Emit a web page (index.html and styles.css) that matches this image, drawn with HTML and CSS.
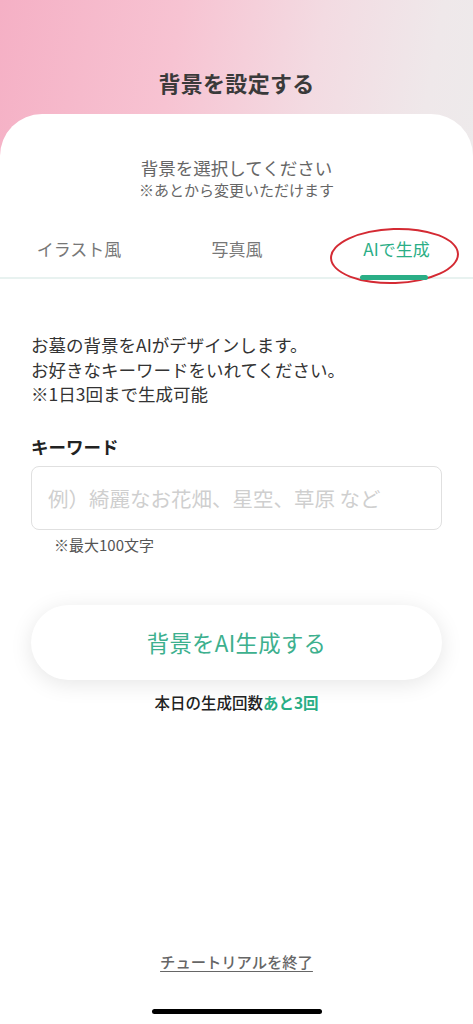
FILE: index.html
```html
<!DOCTYPE html>
<html lang="ja">
<head>
<meta charset="utf-8">
<title>背景を設定する</title>
<link rel="stylesheet" href="styles.css">
</head>
<body>
<div class="screen">
  <header class="header">
    <h1 class="title">背景を設定する</h1>
  </header>
  <main class="card">
    <div class="intro">
      <p class="intro-main">背景を選択してください</p>
      <p class="intro-sub">※あとから変更いただけます</p>
    </div>
    <nav class="tabs">
      <div class="tab">イラスト風</div>
      <div class="tab">写真風</div>
      <div class="tab active">AIで生成<span class="ring"></span></div>
    </nav>
    <section class="content">
      <p class="desc">お墓の背景をAIがデザインします。<br>お好きなキーワードをいれてください。<br>※1日3回まで生成可能</p>
      <label class="label">キーワード</label>
      <div class="input">例）綺麗なお花畑、星空、草原 など</div>
      <p class="note">※最大100文字</p>
      <button class="gen-btn">背景をAI生成する</button>
      <p class="count">本日の生成回数<span class="green">あと3回</span></p>
    </section>
    <div class="spacer"></div>
    <footer class="footer">
      <a class="end-link">チュートリアルを終了</a>
      <div class="home-bar"></div>
    </footer>
  </main>
</div>
</body>
</html>
```

FILE: styles.css
```css
* { box-sizing: border-box; margin: 0; padding: 0; }
html, body { width: 473px; height: 1024px; overflow: hidden; }
body {
  font-family: "Noto Sans CJK JP", "Noto Sans", sans-serif;
  background: #fff;
}
.screen {
  height: 1024px;
  display: flex;
  flex-direction: column;
  background: linear-gradient(100deg, #f5b0c5 0%, #f7c3d2 28%, #f3dbe2 50%, #efe8ea 68%, #ececec 85%, #ededed 100%);
}
.header {
  height: 114px;
  display: flex;
  align-items: flex-end;
  justify-content: center;
  padding-bottom: 17px;
}
.title {
  font-size: 22px;
  font-weight: 700;
  color: #3a3a3a;
  letter-spacing: 0.3px;
  line-height: 30px;
}
.card {
  flex: 1;
  background: #fff;
  border-radius: 42px 42px 0 0;
  display: flex;
  flex-direction: column;
}
.intro {
  text-align: center;
  padding-top: 41px;
  color: #666;
}
.intro-main { font-size: 17.5px; line-height: 25px; }
.intro-sub { font-size: 15px; line-height: 20px; }
.tabs {
  display: grid;
  grid-template-columns: 158px 158px 157px;
  margin-top: 36px;
  border-bottom: 2px solid #e8f2f0;
}
.tab {
  position: relative;
  text-align: center;
  font-size: 17px;
  color: #777;
  line-height: 26px;
  padding-bottom: 15px;
}
.tab.active { color: #2aae86; padding-left: 4px; }
.tab.active::after {
  content: "";
  position: absolute;
  left: 44px;
  width: 68px;
  bottom: -3px;
  height: 5px;
  border-radius: 3px;
  background: #2aae86;
}
.ring {
  position: absolute;
  left: 14px;
  top: -8px;
  width: 129px;
  height: 56px;
  border: 2px solid #d42a33;
  border-radius: 50%;
  transform: rotate(-2deg);
}
.content {
  padding: 54px 31px 0;
}
.desc {
  font-size: 17.5px;
  line-height: 24.5px;
  color: #333;
}
.label {
  display: block;
  margin-top: 28px;
  font-size: 17.5px;
  font-weight: 700;
  color: #222;
  line-height: 24px;
}
.input {
  margin-top: 7px;
  height: 64px;
  border: 1.5px solid #e0e0e0;
  border-radius: 8px;
  padding-left: 16px;
  display: flex;
  align-items: center;
  font-size: 20.5px;
  color: #cfcfcf;
}
.note {
  margin-top: 4px;
  padding-left: 23px;
  font-size: 15px;
  color: #555;
  line-height: 22px;
}
.gen-btn {
  display: block;
  width: 100%;
  margin-top: 49px;
  height: 75px;
  border: none;
  border-radius: 38px;
  background: #fff;
  box-shadow: 0 4px 22px rgba(0,0,0,0.10);
  font-family: inherit;
  font-size: 22.4px;
  color: #3db08e;
  letter-spacing: 0.3px;
}
.count {
  margin-top: 11px;
  text-align: center;
  font-size: 15.5px;
  font-weight: 500;
  color: #222;
  line-height: 22px;
}
.green { color: #2aae86; font-weight: 700; }
.spacer { flex: 1; }
.footer {
  display: flex;
  flex-direction: column;
  align-items: center;
  padding-bottom: 10px;
}
.end-link {
  font-size: 15.3px;
  color: #666;
  text-decoration: underline;
  text-underline-offset: 3px;
  line-height: 22px;
  font-weight: 500;
}
.home-bar {
  margin-top: 37px;
  width: 170px;
  height: 5px;
  border-radius: 3px;
  background: #000;
}
```
